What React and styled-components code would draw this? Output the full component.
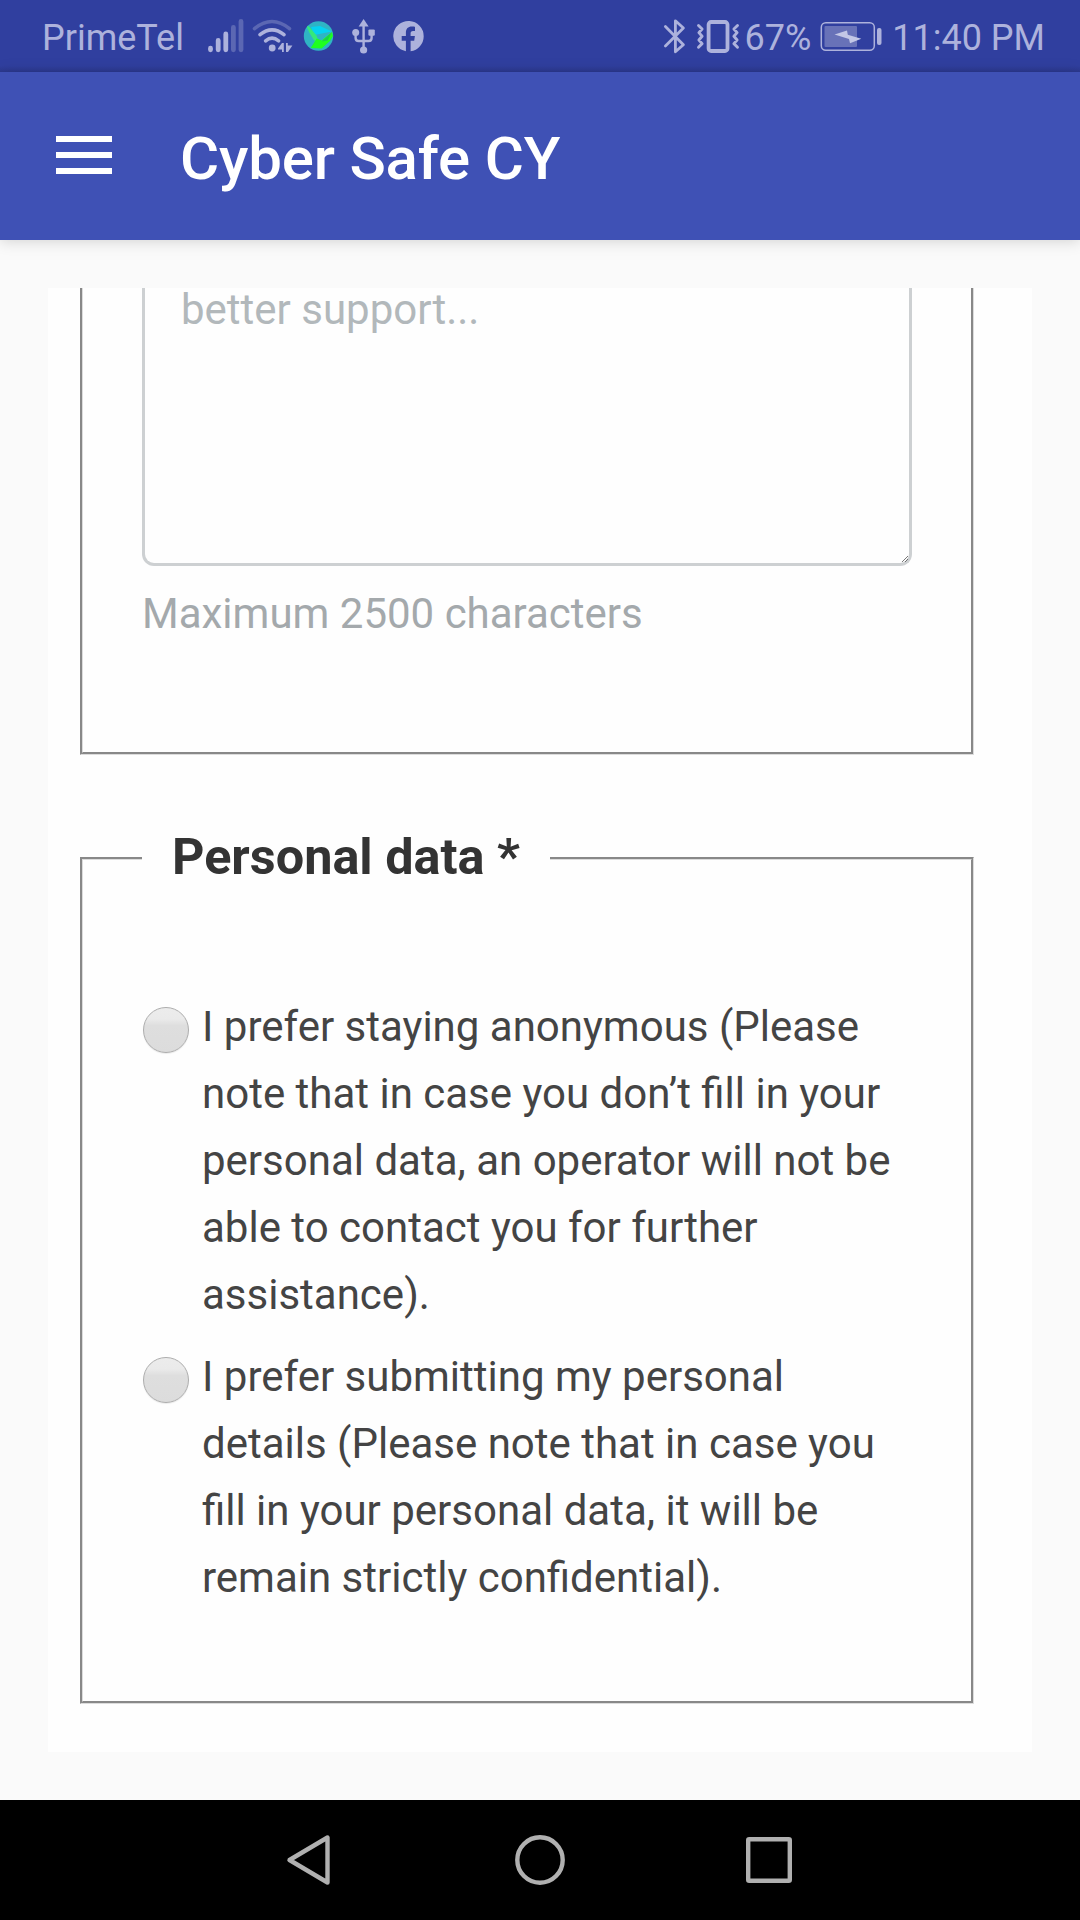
import React from "react";
import styled, { createGlobalStyle } from "styled-components";

const GlobalStyle = createGlobalStyle`
  *, *::before, *::after { box-sizing: border-box; }
  body { margin: 0; font-family: Roboto, "Liberation Sans", sans-serif; background: #fafafa; }
`;

const TINT = "#adb2dc";
const DIM = "#5b67b3";

const Screen = styled.div`
  width: 1080px;
  height: 1920px;
  display: flex;
  flex-direction: column;
  overflow: hidden;
  background: #fafafa;
`;

const StatusBar = styled.div`
  height: 72px;
  flex: none;
  display: flex;
  justify-content: space-between;
  padding: 0 35px 0 42px;
  background: linear-gradient(#303f9f 0 66px, #2c3990 72px);
  color: ${TINT};
`;

const StatusGroup = styled.div`
  display: flex;
  align-items: flex-start;
`;

const StatusText = styled.span`
  font-size: 36px;
  line-height: 42px;
  margin-top: 17px;
  margin-left: ${(p) => p.$gap || 0}px;
  white-space: nowrap;
`;

const StatusIcon = styled.svg`
  display: block;
  flex: none;
  height: 72px;
  margin-left: ${(p) => p.$gap || 0}px;
`;

const AppBar = styled.header`
  height: 168px;
  flex: none;
  display: flex;
  align-items: center;
  padding-left: 56px;
  background: #3f51b5;
  box-shadow: 0 1px 14px rgba(0, 0, 0, 0.17);
  position: relative;
  color: #fff;
`;

const MenuButton = styled.button`
  width: 56px;
  height: 38px;
  padding: 0;
  border: 0;
  background: none;
  display: flex;
  flex-direction: column;
  justify-content: space-between;
  margin-top: -2px;
`;

const MenuLine = styled.span`
  height: 6px;
  width: 100%;
  background: #fff;
`;

const Title = styled.h1`
  margin: 6px 0 0 68px;
  font-size: 60px;
  line-height: 70px;
  font-weight: 500;
  letter-spacing: -0.18px;
  white-space: nowrap;
`;

const Content = styled.main`
  flex: 1;
  padding: 48px;
  display: flex;
`;

const Card = styled.section`
  flex: 1;
  overflow: hidden;
  background: #fefefe;
  padding: 0 58px 48px 32px;
  display: flex;
  flex-direction: column;
  justify-content: flex-end;
`;

const Group = styled.fieldset`
  flex: none;
  min-width: 0;
  margin: 0;
  border: 3px groove #dcdcdc;
  padding: 0 59px;
  height: ${(p) => p.$height}px;
`;

const Legend = styled.legend`
  padding: 0 30px 4px;
  font-size: 50.4px;
  line-height: 67px;
  font-weight: 700;
  color: #333;
  white-space: nowrap;
`;

const FieldWrap = styled.div`
  position: relative;
  height: 278px;
`;

const TextArea = styled.textarea`
  display: block;
  width: 100%;
  height: 100%;
  resize: none;
  border: 3px solid #cdd0d2;
  border-radius: 12px;
  background: transparent;
  padding: 0 36px;
  font: 400 42px/44px Roboto, sans-serif;
  outline: none;
  &::placeholder {
    color: #b2b8bb;
    opacity: 1;
  }
`;

const Grip = styled.svg`
  position: absolute;
  right: 4px;
  bottom: 4px;
`;

const Hint = styled.p`
  margin: 23px 0 0;
  font-size: 42px;
  line-height: 50px;
  color: #a4a9ac;
`;

const Options = styled.div`
  display: flex;
  flex-direction: column;
  gap: 15px;
  padding-top: ${(p) => p.$top}px;
`;

const Option = styled.label`
  display: flex;
  align-items: flex-start;
`;

const Radio = styled.span`
  flex: none;
  width: 46px;
  height: 46px;
  margin: 14px 13px 0 1px;
  border-radius: 50%;
  border: 1px solid #adadad;
  background: linear-gradient(#ececec 0, #eaeaea 25%, #dedede 40%, #dcdcdc 100%);
  box-shadow: 0 1px 1px rgba(0, 0, 0, 0.08);
`;

const OptionText = styled.span`
  font-size: 42px;
  line-height: 67px;
  color: #444;
  white-space: pre-line;
`;

const NavBar = styled.nav`
  height: 120px;
  flex: none;
  background: #000;
  display: flex;
  align-items: center;
  justify-content: space-between;
  padding: 0 284px;
`;

const NavIcon = styled.svg`
  display: block;
  fill: none;
  stroke: #b0b0b0;
  stroke-width: 4.4;
  stroke-linejoin: round;
`;

const Signal = () => (
  <StatusIcon $gap={23} width="38" viewBox="207 0 38 72">
    <g strokeWidth="4.8" strokeLinecap="round">
      <path d="M210.5 48.2v1.6M218.2 40.5v9.3M225.8 34v15.8" stroke={TINT} />
      <path d="M233.4 27.5v22.3M241 21.5v28.3" stroke={DIM} />
    </g>
  </StatusIcon>
);

const Wifi = () => (
  <StatusIcon $gap={6} width="42" viewBox="251 0 42 72" fill="none" strokeLinecap="round">
    <path d="M254.5 28.6Q272 14.4 289.5 28.6" stroke={DIM} strokeWidth="3.6" />
    <path d="M260 34.6Q272 25 284 34.6M265.6 40.8Q272 35.6 278.6 40.8" stroke={TINT} strokeWidth="3.6" />
    <circle cx="272.2" cy="48" r="3.4" fill={TINT} />
    <path d="M278 48.4L282 43h1.8v9H282v-2.4h-4zM286 43h1.8v2.6h4.6L288 52h-2z" fill={TINT} />
  </StatusIcon>
);

const Globe = () => (
  <StatusIcon $gap={10} width="31" viewBox="303 0 31 72">
    <clipPath id="globe"><circle cx="318.5" cy="36" r="14.7" /></clipPath>
    <g clipPath="url(#globe)">
      <path d="M303 20h31v32h-31z" fill="#2fb4c4" />
      <path d="M311 27L320 26 332 31.5 314 35z" fill="#06d2f0" />
      <path d="M306 25l3.500 2 7 8.500 1.500 4-3.500 1.500-5-8z" fill="#35e87a" />
      <path d="M332 32l1 4-3 5-8.300 7.500-11-.5 6-9.500 5 2z" fill="#1fff20" />
      <path d="M321.700 41.500l10-9-4 8z" fill="#1cd04a" />
    </g>
  </StatusIcon>
);

const Usb = () => (
  <StatusIcon $gap={17} width="26" viewBox="351 0 26 72" fill={TINT}>
    <path d="M363.6 19l5 7.4h-10z" />
    <path d="M363.6 25v24M355.6 34v4q0 3 3 3h10q3 0 3-3v-4" fill="none" stroke={TINT} strokeWidth="2.4" />
    <circle cx="355.7" cy="32.6" r="3.5" />
    <rect x="368.4" y="29.4" width="6.4" height="6.4" rx="1.2" />
    <circle cx="363.6" cy="50" r="3.6" />
  </StatusIcon>
);

const Facebook = () => (
  <StatusIcon $gap={16} width="32" viewBox="393 0 32 72">
    <path
      fill={TINT}
      d="M423.7 36.2a15.2 15.2 0 1 0-17.8 15V40.7h-4.2v-4.6h4.2v-3.4c0-4 2.3-6.1 5.8-6.1 1.7 0 3.3.3 3.3.3v4h-1.9c-1.9 0-2.5 1.1-2.5 2.3v2.9h4.3l-.7 4.6h-3.6v10.5a15.2 15.2 0 0 0 13.1-15z"
    />
  </StatusIcon>
);

const Bluetooth = () => (
  <StatusIcon width="26" viewBox="662 0 26 72" fill="none" stroke={TINT} strokeWidth="2.8" strokeLinejoin="round" strokeLinecap="round">
    <path d="M665.4 26.6L683.4 44.8 675.4 51.8V20.8L683.4 28 665.4 46" />
  </StatusIcon>
);

const Vibrate = () => (
  <StatusIcon $gap={7} width="46" viewBox="695 0 46 72" fill="none" stroke={TINT}>
    <rect x="708.6" y="22" width="18.9" height="29" rx="2.5" strokeWidth="3.8" />
    <path
      strokeWidth="2.9"
      strokeLinejoin="round"
      strokeLinecap="round"
      d="M698.5 25.5l3.6 3.5-3.2 3.6 3.2 3.7-3.2 3.7 3.2 3.6-3.6 3.6M737.5 25.5l-3.6 3.5 3.2 3.6-3.2 3.7 3.2 3.7-3.2 3.6 3.6 3.6"
    />
  </StatusIcon>
);

const Battery = () => (
  <StatusIcon $gap={9} width="63" viewBox="820 0 63 72">
    <rect x="821.3" y="22.7" width="53" height="27.6" rx="4.5" fill="none" stroke={TINT} strokeWidth="1.5" />
    <rect x="824.5" y="26" width="32.5" height="21" rx="1" fill="#6872b8" />
    <path d="M834.5 34.500L847 30.500 847.800 34.800 861.300 38.800 850 43.300 849 39z" fill="#c3c7e6" />
    <rect x="877" y="28" width="4.5" height="17" rx="2" fill={TINT} />
  </StatusIcon>
);

const OPTIONS = [
  "I prefer staying anonymous (Please\nnote that in case you don’t fill in your\npersonal data, an operator will not be\nable to contact you for further\nassistance).",
  "I prefer submitting my personal\ndetails (Please note that in case you\nfill in your personal data, it will be\nremain strictly confidential).",
];

const DescriptionGroup = styled(Group)`
  border-top: 0;
  margin-bottom: 68px;
`;

const OpenTextArea = styled(TextArea)`
  border-top: 0;
  border-top-left-radius: 0;
  border-top-right-radius: 0;
`;

export default function App() {
  return (
    <Screen>
      <GlobalStyle />
      <StatusBar>
        <StatusGroup>
          <StatusText>PrimeTel</StatusText>
          <Signal />
          <Wifi />
          <Globe />
          <Usb />
          <Facebook />
        </StatusGroup>
        <StatusGroup>
          <Bluetooth />
          <Vibrate />
          <StatusText $gap={3}>67%</StatusText>
          <Battery />
          <StatusText $gap={9}>11:40 PM</StatusText>
        </StatusGroup>
      </StatusBar>
      <AppBar>
        <MenuButton aria-label="Menu">
          <MenuLine />
          <MenuLine />
          <MenuLine />
        </MenuButton>
        <Title>Cyber Safe CY</Title>
      </AppBar>
      <Content>
        <Card>
          <DescriptionGroup $height={467}>
            <FieldWrap>
              <OpenTextArea placeholder="better support..." />
              <Grip width="6" height="6" viewBox="0 0 6 6" stroke="#555" strokeWidth="0.8">
                <path d="M0 6L6 0M3 6L6 3" />
              </Grip>
            </FieldWrap>
            <Hint>Maximum 2500 characters</Hint>
          </DescriptionGroup>
          <Group $height={881}>
            <Legend>Personal data *</Legend>
            <Options $top={99}>
              {OPTIONS.map((text) => (
                <Option key={text}>
                  <Radio role="radio" aria-checked="false" />
                  <OptionText>{text}</OptionText>
                </Option>
              ))}
            </Options>
          </Group>
        </Card>
      </Content>
      <NavBar>
        <NavIcon width="54" height="54" viewBox="0 0 54 54">
          <path d="M5.5 27L43.5 4.5V49.5z" />
        </NavIcon>
        <NavIcon width="54" height="54" viewBox="0 0 54 54">
          <circle cx="27" cy="27" r="22.7" />
        </NavIcon>
        <NavIcon width="54" height="54" viewBox="0 0 54 54">
          <rect x="6.2" y="6.2" width="41.6" height="41.6" rx="1" />
        </NavIcon>
      </NavBar>
    </Screen>
  );
}
